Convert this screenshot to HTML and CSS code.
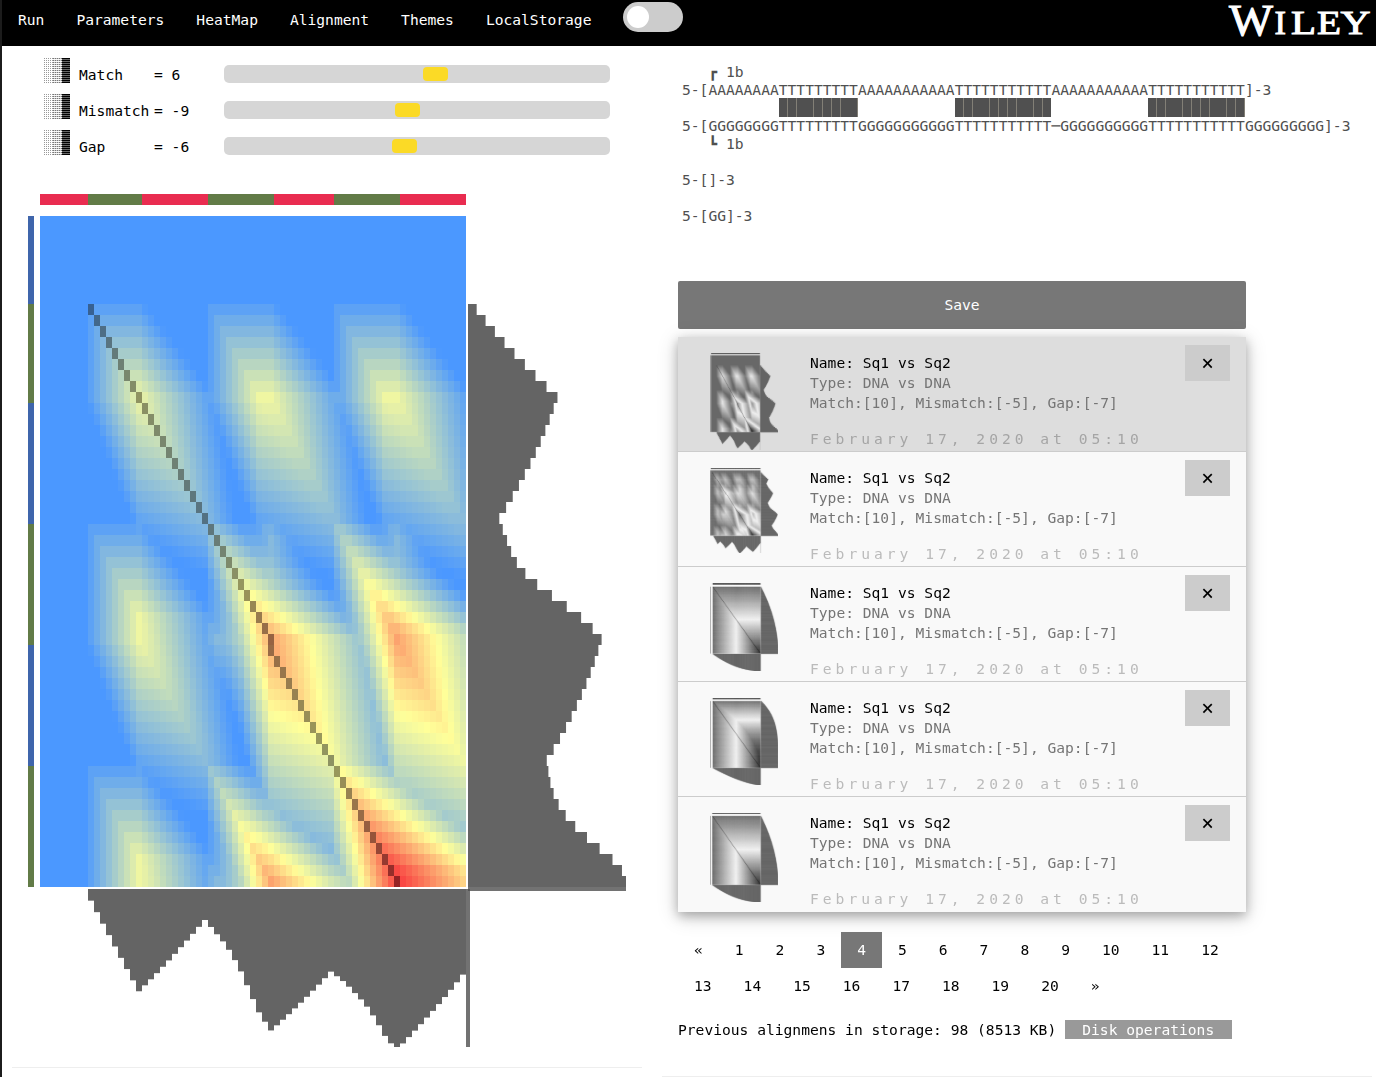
FILE: index.html
```
<!DOCTYPE html>
<html lang="en">
<head>
<meta charset="utf-8">
<title>Sequence alignment</title>
<link rel="stylesheet" href="styles.css">
</head>
<body>
<header class="nav">
  <nav class="nav-links">
    <a>Run</a><a>Parameters</a><a>HeatMap</a><a>Alignment</a><a>Themes</a><a>LocalStorage</a>
  </nav>
  <span class="toggle"><span class="knob"></span></span>
  <svg class="logo" width="148" height="46" viewBox="0 0 148 46">
    <text class="logo-big" x="1" y="34.5" textLength="44" lengthAdjust="spacingAndGlyphs">W</text>
    <text class="logo-small" x="46.5" y="34">I</text>
    <text class="logo-small" x="63" y="34" textLength="25" lengthAdjust="spacingAndGlyphs">L</text>
    <text class="logo-small" x="89" y="34" textLength="24" lengthAdjust="spacingAndGlyphs">E</text>
    <text class="logo-small" x="112.5" y="34" textLength="30" lengthAdjust="spacingAndGlyphs">Y</text>
  </svg>
</header>
<main class="columns">
  <section class="left">
    <div class="params">
      <div class="param"><i class="shade"></i><span class="pname">Match</span><span class="pvalue">= 6</span><span class="slider"><b style="margin-left:199px"></b></span></div>
      <div class="param"><i class="shade"></i><span class="pname">Mismatch</span><span class="pvalue">= -9</span><span class="slider"><b style="margin-left:171px"></b></span></div>
      <div class="param"><i class="shade"></i><span class="pname">Gap</span><span class="pvalue">= -6</span><span class="slider"><b style="margin-left:168px"></b></span></div>
    </div>
    <canvas id="figure" class="figure" width="598" height="853"></canvas>
  </section>
  <section class="right">
<pre class="alignment">   ┏ 1b
5-[AAAAAAAATTTTTTTTTAAAAAAAAAAATTTTTTTTTTTAAAAAAAAAAATTTTTTTTTTT]-3
<span class="bars"><i class="run b9"></i><i class="run b11"></i><i class="run b11"></i></span>
5-[GGGGGGGGTTTTTTTTTGGGGGGGGGGGTTTTTTTTTTT─GGGGGGGGGGTTTTTTTTTTTGGGGGGGGG]-3
   ┗ 1b

5-[]-3

5-[GG]-3</pre>
    <div class="save">Save</div>
    <ul class="list">
      <li class="item current"><canvas class="thumb" width="68" height="98"></canvas><div class="info"><p class="name">Name: Sq1 vs Sq2</p><p>Type: DNA vs DNA</p><p>Match:[10], Mismatch:[-5], Gap:[-7]</p><p class="date">February 17, 2020 at 05:10</p></div><span class="close">×</span></li>
      <li class="item"><canvas class="thumb" width="68" height="98"></canvas><div class="info"><p class="name">Name: Sq1 vs Sq2</p><p>Type: DNA vs DNA</p><p>Match:[10], Mismatch:[-5], Gap:[-7]</p><p class="date">February 17, 2020 at 05:10</p></div><span class="close">×</span></li>
      <li class="item"><canvas class="thumb" width="68" height="98"></canvas><div class="info"><p class="name">Name: Sq1 vs Sq2</p><p>Type: DNA vs DNA</p><p>Match:[10], Mismatch:[-5], Gap:[-7]</p><p class="date">February 17, 2020 at 05:10</p></div><span class="close">×</span></li>
      <li class="item"><canvas class="thumb" width="68" height="98"></canvas><div class="info"><p class="name">Name: Sq1 vs Sq2</p><p>Type: DNA vs DNA</p><p>Match:[10], Mismatch:[-5], Gap:[-7]</p><p class="date">February 17, 2020 at 05:10</p></div><span class="close">×</span></li>
      <li class="item"><canvas class="thumb" width="68" height="98"></canvas><div class="info"><p class="name">Name: Sq1 vs Sq2</p><p>Type: DNA vs DNA</p><p>Match:[10], Mismatch:[-5], Gap:[-7]</p><p class="date">February 17, 2020 at 05:10</p></div><span class="close">×</span></li>
    </ul>
    <div class="pages"><a>«</a><a>1</a><a>2</a><a>3</a><a class="on">4</a><a>5</a><a>6</a><a>7</a><a>8</a><a>9</a><a>10</a><a>11</a><a>12</a><a>13</a><a>14</a><a>15</a><a>16</a><a>17</a><a>18</a><a>19</a><a>20</a><a>»</a></div>
    <div class="storage"><span>Previous alignmens in storage: 98 (8513 KB)</span><span class="disk">Disk operations</span></div>
  </section>
</main>
<script src="script.js"></script>
</body>
</html>
```
FILE: styles.css
```
* { box-sizing: border-box; }
body {
  margin: 0;
  height: 1077px;
  overflow: hidden;
  border-left: 2px solid #1c1c1c;
  background: #fff;
  color: #000;
  font: 14.617px/18px "DejaVu Sans Mono", monospace;
}
p, ul, pre { margin: 0; padding: 0; font: inherit; }

.nav { display: flex; height: 46px; background: #000; color: #fff; }
.nav-links { display: flex; }
.nav-links a { padding: 11px 16px; }
.toggle { width: 60px; height: 30px; margin: 2px 0 0 16px; padding: 4px; border-radius: 15px; background: #ccc; }
.knob { display: block; width: 22px; height: 22px; border-radius: 50%; background: #fff; }
.logo { margin-left: auto; }
.logo text { font-family: "Liberation Serif", serif; fill: #fff; stroke: #fff; stroke-width: 1; }
.logo .logo-big { font-size: 44.5px; }
.logo .logo-small { font-size: 34.5px; }

.columns { display: flex; }
.left { width: 630px; height: 1022px; margin-left: 10px; border-bottom: 1px solid #eee; }
.params { display: grid; grid-auto-rows: 36px; padding: 10px 0 0 32px; height: 148px; }
.param { display: flex; align-items: flex-start; }
.shade {
  width: 26px; height: 25px; margin: 2px 9px 0 0;
  background:
    repeating-linear-gradient(0deg, #000 0 1px, rgba(0,0,0,.6) 1px 2px) 18px 0 / 8px 25px no-repeat,
    repeating-linear-gradient(90deg, transparent 0 1px, #fff 1px 2px) 0 0 / 9px 25px no-repeat,
    repeating-linear-gradient(90deg, transparent 0 1px, rgba(255,255,255,.6) 1px 2px) 9px 0 / 9px 25px no-repeat,
    repeating-linear-gradient(0deg, #777 0 1px, #f4f4f4 1px 2px) 9px 0 / 9px 25px no-repeat,
    repeating-linear-gradient(0deg, #999 0 1px, #fff 1px 2px) 0 0 / 9px 25px no-repeat;
}
.pname { width: 75px; padding-top: 10px; }
.pvalue { width: 70px; padding-top: 10px; }
.slider { width: 386px; height: 18px; margin-top: 9px; padding-top: 2px; border-radius: 5px; background: #d6d6d6; }
.slider b { display: block; width: 25px; height: 14px; border-radius: 4px; background: #fbda26; }
.figure { display: block; margin-left: 16px; }

.right { width: 710px; height: 1031px; margin-left: 20px; padding: 17px 16px 0; border-bottom: 1px solid #eee; }
.alignment { height: 218px; padding-left: 4px; color: #505050; }
.bars { display: inline-flex; gap: 11ch; height: 18px; padding-left: 11ch; vertical-align: top; }
.run { height: 19px; margin-top: -1px; background: repeating-linear-gradient(90deg, #505050 0 8px, #827f76 8px 8.8px); }
.b9 { width: 9ch; }
.b11 { width: 11ch; }
.save { width: 568px; height: 48px; line-height: 48px; border-radius: 2px; background: #777; color: #fff; text-align: center; }
.list { width: 568px; margin-top: 8px; list-style: none; box-shadow: 0 4px 10px rgba(0,0,0,.25), 0 4px 20px rgba(0,0,0,.19); }
.item { display: flex; align-items: flex-start; height: 115px; padding: 0 16px 0 32px; border-bottom: 1px solid #ccc; background: #f9f9f9; }
.item:last-child { border-bottom: 0; }
.current { background: #ddd; }
.thumb { margin-top: 16px; }
.info { flex: 1; padding: 16px 0 0 32px; line-height: 20px; color: #757575; }
.info .name { color: #000; }
.info .date { margin-top: 16px; letter-spacing: 4px; color: #bbb; }
.current .date { color: #a5a5a5; }
.close { width: 45px; height: 36px; margin-top: 8px; background: #ccc; line-height: 37px; font-size: 21px; text-align: center; }
.pages { display: flex; flex-wrap: wrap; width: 568px; margin-top: 20px; }
.pages a { padding: 9px 16px; }
.pages .on { background: #777; color: #fff; }
.storage { display: flex; margin-top: 16px; line-height: 19px; }
.disk { width: 167px; margin-left: 8.5px; background: #999; color: #fff; text-align: center; }
```
FILE: script.js
```
const MATCH = 10, MISMATCH = -5, GAP = -7;
const GREY = '#646464';
const HUES = { A: '#3f65ab', T: '#627b47', G: '#e92c50' };

// Expands [['A', 8], ['T', 9]] to a sequence string.
const expand = runs => runs.map(([c, n]) => c.repeat(n)).join('');

// Local alignment score matrix.
function scores(rows, cols) {
  const m = [];
  for (let i = 0; i < rows.length; i++) {
    m.push([]);
    for (let j = 0; j < cols.length; j++) {
      const diag = i && j ? m[i - 1][j - 1] : 0;
      const up = i ? m[i - 1][j] : 0;
      const left = j ? m[i][j - 1] : 0;
      m[i].push(Math.max(0, diag + (rows[i] === cols[j] ? MATCH : MISMATCH), up + GAP, left + GAP));
    }
  }
  return m;
}

function ramp(t, stops) {
  const k = t < 0.5 ? 0 : 1;
  const f = t * 2 - k;
  return 'rgb(' + stops[k].map((v, n) => Math.round(v + (stops[k + 1][n] - v) * f)).join(',') + ')';
}
const COLOUR = [[75, 152, 255], [255, 255, 153], [249, 58, 61]];
const GRAY = [[104, 104, 104], [240, 240, 240], [48, 48, 48]];

// Heat map, sequence strips and the two side histograms; o holds the geometry.
function drawFigure(ctx, o) {
  const m = o.matrix, R = m.length, C = m[0].length;
  const w = o.w / C, h = o.h / R;
  const top = Math.max(...m.flat());
  const rowSum = m.map(r => r.reduce((a, b) => a + b, 0));
  const colSum = m[0].map((_, j) => m.reduce((a, r) => a + r[j], 0));
  const rMax = Math.max(...rowSum), cMax = Math.max(...colSum);
  const bar = (v, max) => Math.min(o.side, v / max * (o.side + 2.3));
  const hue = c => o.gray ? '#555' : HUES[c];
  for (let j = 0; j < C; j++) {
    ctx.fillStyle = hue(o.cols[j]);
    ctx.fillRect(o.x + j * w, 0, w, o.strip);
  }
  for (let i = 0; i < R; i++) {
    ctx.fillStyle = hue(o.rows[i]);
    ctx.fillRect(0, o.y + i * h, 6, h);
    for (let j = 0; j < C; j++) {
      ctx.fillStyle = ramp(m[i][j] / top, o.gray ? GRAY : COLOUR);
      ctx.fillRect(o.x + j * w, o.y + i * h, w, h);
    }
  }
  ctx.fillStyle = 'rgba(0,0,0,.4)';
  for (const [i, j] of o.path) ctx.fillRect(o.x + j * w, o.y + i * h, w, h);
  ctx.fillStyle = GREY;
  const right = o.x + o.w, bottom = o.y + o.h;
  for (let i = 0; i < R; i++) ctx.fillRect(right + 2, o.y + i * h, bar(rowSum[i], rMax), h);
  for (let j = 0; j < C; j++) ctx.fillRect(o.x + j * w, bottom + 2, w, bar(colSum[j], cMax));
  ctx.fillStyle = 'rgba(79,79,79,.8)';
  ctx.fillRect(right + 2, bottom, o.side, 4);
  ctx.fillRect(right, bottom + 2, o.gray ? 2 : 4, o.side);
}

const mainRows = expand([['A', 8], ['T', 9], ['A', 11], ['T', 11], ['A', 11], ['T', 11]]);
const mainCols = expand([['G', 8], ['T', 9], ['G', 11], ['T', 11], ['G', 10], ['T', 11], ['G', 11]]);
const mainPath = [];
for (let i = 8; i < 61; i++) mainPath.push([i, i > 38 ? i - 1 : i]);
const main = {
  matrix: scores(mainRows, mainCols), rows: mainRows, cols: mainCols, path: mainPath,
  x: 12, y: 22, w: 426, h: 671, strip: 11, side: 158
};
drawFigure(document.getElementById('figure').getContext('2d'), main);

const diagonal = (r, c, from = 0) => {
  const p = [];
  for (let i = from; i < r; i++) p.push([i, Math.min(c - 1, Math.round(i * c / r))]);
  return p;
};
const rows2 = expand([['A', 2], ['T', 7], ['A', 4], ['T', 9], ['A', 9], ['T', 11], ['A', 10], ['T', 9]]);
const cols2 = expand([['G', 4], ['T', 7], ['G', 4], ['T', 8], ['G', 10], ['T', 12], ['G', 10], ['T', 10], ['G', 11]]);
const slope = f => Array.from({ length: 60 }, (_, i) => Array.from({ length: 60 }, (_, j) => f((i + 1) / 60, (j + 1) / 60)));
const plain = 'T'.repeat(60);
const linear = slope((i, j) => Math.min(i, j));
const bent = slope((i, j) => Math.min(j, 1 - Math.pow(1 - i, 2)));

const thumbs = [
  { ...main, fit: 97 },
  { matrix: scores(rows2, cols2), rows: rows2, cols: cols2, path: diagonal(61, 65, 2), x: 9, y: 22, w: 434, h: 572, strip: 11, side: 153, fit: 85 },
  { matrix: linear, rows: plain, cols: plain, path: diagonal(60, 60), x: 25, y: 32, w: 418, h: 590, strip: 15, side: 152, fit: 88 },
  { matrix: bent, rows: plain, cols: plain, path: diagonal(60, 60), x: 25, y: 28, w: 418, h: 588, strip: 13, side: 152, fit: 87 },
  { matrix: linear, rows: plain, cols: plain, path: diagonal(60, 60), x: 22, y: 26, w: 421, h: 606, strip: 9, side: 152, fit: 89 }
];
document.querySelectorAll('.thumb').forEach((canvas, n) => {
  const o = { ...thumbs[n], gray: true };
  const big = document.createElement('canvas');
  big.width = 598;
  big.height = o.y + o.h + o.side + 2;
  drawFigure(big.getContext('2d'), o);
  const ctx = canvas.getContext('2d');
  ctx.imageSmoothingQuality = 'high';
  ctx.drawImage(big, 0, 0, 68, o.fit);
});
```
